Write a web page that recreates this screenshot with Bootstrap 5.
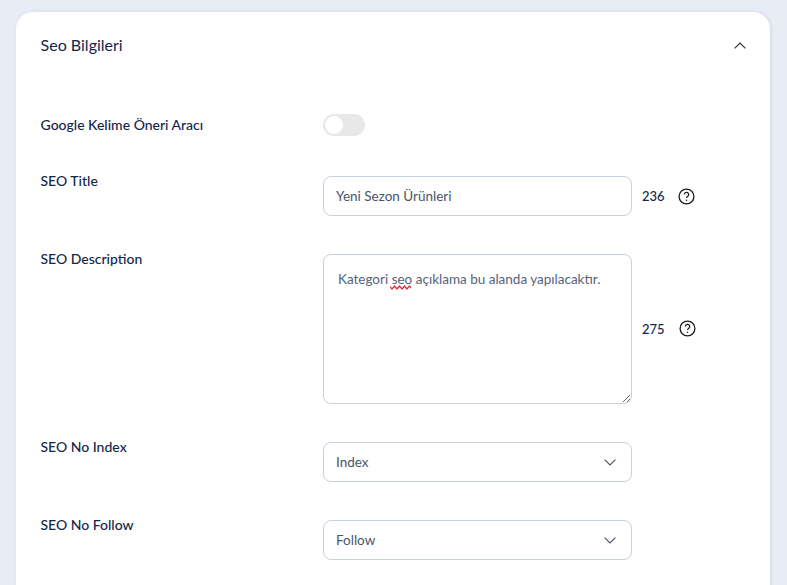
<!DOCTYPE html>
<html lang="tr">
<head>
<meta charset="utf-8">
<title>Seo Bilgileri</title>
<link href="https://cdn.jsdelivr.net/npm/bootstrap@5.3.0/dist/css/bootstrap.min.css" rel="stylesheet">
<style>
html,body{height:585px;overflow:hidden}
body{background:#e8ecf5;font-family:"Lato","Noto Sans",sans-serif;color:#14264a;padding:12px 17px 0 16px}
.seo-panel{border:0;border-radius:17px;box-shadow:1px 0 4px rgba(120,135,170,.18);height:800px;--bs-card-bg:#fff}
.seo-head{padding:23px 24px 0 24.6px;height:66px;font-size:16px;line-height:20px;color:#14264a}
.seo-body{padding:36px 24px 0 24.5px}
.seo-row{margin-bottom:38px}
.seo-row-switch{height:22px;margin-bottom:40px}
.seo-label{width:282.5px;flex:none;font-size:14px;line-height:10px;font-weight:500;margin:0;color:#14264a}
.seo-field{width:309px;flex:none}
.seo-field .form-control,.seo-field .form-select{height:40px;border:1px solid #c6d0de;border-radius:8px;font-size:13.5px;color:#4a5568;padding:0 12px 1px;box-shadow:none}
.seo-field .form-select{padding:1px 12px 0;background-image:url("data:image/svg+xml,%3csvg xmlns='http://www.w3.org/2000/svg' viewBox='0 0 12 7'%3e%3cpath fill='none' stroke='%234a5568' stroke-width='1.2' d='M.6.6 6 6l5.4-5.4'/%3e%3c/svg%3e");background-size:12px 7px;background-position:right 15px center}
.seo-field textarea.form-control{height:150px;padding:14px 14px;line-height:20px;resize:both;color:#55637a}
.seo-count{font-size:13px;font-weight:500;width:36px;margin-left:10px;line-height:20px}
.seo-switch{width:42px;height:22px;border-radius:11px;background:#e8e8e8;padding:2px}
.seo-knob{width:18px;height:18px;border-radius:50%;background:#fff}
.seo-squiggle{position:absolute;left:67px;top:31px}
.seo-caret{margin-top:7px}
.seo-help-shift{margin-left:1px}
.seo-side-input{height:40px}
.seo-side-area{height:149px}
</style>
</head>
<body>
<div class="card seo-panel">
  <div class="seo-head d-flex justify-content-between">
    <span>Seo Bilgileri</span>
    <svg width="12" height="7" viewBox="0 0 12 7" class="seo-caret"><path fill="none" stroke="#333" stroke-width="1.2" d="M.6 6.4 6 1l5.4 5.4"/></svg>
  </div>
  <div class="seo-body">
    <div class="seo-row-switch d-flex align-items-center">
      <label class="seo-label">Google Kelime Öneri Aracı</label>
      <div class="seo-switch"><div class="seo-knob"></div></div>
    </div>
    <div class="seo-row d-flex align-items-start">
      <label class="seo-label">SEO Title</label>
      <div class="seo-field"><input class="form-control" value="Yeni Sezon Ürünleri"></div>
      <div class="d-flex align-items-center seo-side-input">
        <span class="seo-count">236</span>
        <svg width="17" height="17" viewBox="0 0 17 17"><circle cx="8.5" cy="8.5" r="7.4" fill="none" stroke="#1d1d1d" stroke-width="1.3"/><path fill="none" stroke="#1d1d1d" stroke-width="1.3" d="M6.3 6.6a2.2 2.2 0 1 1 3.3 1.9c-.7.4-1.1.8-1.1 1.6"/><circle cx="8.5" cy="12.2" r=".8" fill="#1d1d1d"/></svg>
      </div>
    </div>
    <div class="seo-row d-flex align-items-start">
      <label class="seo-label">SEO Description</label>
      <div class="seo-field position-relative">
        <textarea class="form-control d-block" spellcheck="false">Kategori seo açıklama bu alanda yapılacaktır.</textarea>
        <svg class="seo-squiggle" width="21" height="5" viewBox="0 0 21 5"><path fill="none" stroke="#e8273a" stroke-width="1.2" d="M0 1.5 2 4l2.5-3L7 4l2.5-3L12 4l2.5-3L17 4l2.5-3L21 3"/></svg>
      </div>
      <div class="d-flex align-items-center seo-side-area">
        <span class="seo-count">275</span>
        <svg width="17" height="17" viewBox="0 0 17 17" class="seo-help-shift"><circle cx="8.5" cy="8.5" r="7.4" fill="none" stroke="#1d1d1d" stroke-width="1.3"/><path fill="none" stroke="#1d1d1d" stroke-width="1.3" d="M6.3 6.6a2.2 2.2 0 1 1 3.3 1.9c-.7.4-1.1.8-1.1 1.6"/><circle cx="8.5" cy="12.2" r=".8" fill="#1d1d1d"/></svg>
      </div>
    </div>
    <div class="seo-row d-flex align-items-start">
      <label class="seo-label">SEO No Index</label>
      <div class="seo-field"><select class="form-select"><option>Index</option><option>NoIndex</option></select></div>
    </div>
    <div class="seo-row d-flex align-items-start">
      <label class="seo-label">SEO No Follow</label>
      <div class="seo-field"><select class="form-select"><option>Follow</option><option>NoFollow</option></select></div>
    </div>
  </div>
</div>
</body>
</html>
